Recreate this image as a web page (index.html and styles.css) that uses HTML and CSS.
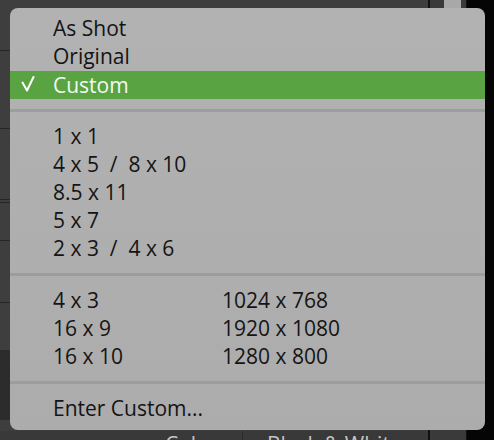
FILE: index.html
```html
<!DOCTYPE html>
<html lang="en">
<head>
  <meta charset="UTF-8" />
  <title>Crop Aspect Menu</title>
  <link rel="stylesheet" href="styles.css">
</head>
<body>

  <!-- panel behind the popup -->
  <div class="workspace">
    <div class="main-col">
      <div class="left-edge">
        <span class="rule r1"></span>
        <span class="rule r2"></span>
        <span class="rule r3"></span>
        <span class="rule r4"></span>
        <span class="rule r5"></span>
        <span class="rule r6"></span>
        <span class="dark-block"></span>
      </div>
      <div class="bottom-bar">
        <span class="tab tab-color">Color</span>
        <span class="tab tab-bw">Black &amp; White</span>
      </div>
    </div>
    <div class="side-col">
      <div class="thumb"></div>
    </div>
    <div class="black-col"></div>
  </div>

  <!-- popup menu -->
  <div class="menu">
    <div class="item">As Shot</div>
    <div class="item">Original</div>
    <div class="item selected">
      <svg class="check" width="14" height="16" viewBox="0 0 14 16">
        <path d="M1.5 6.5 L6 14.5 L12.5 1" fill="none" stroke="#fff" stroke-width="2" stroke-linecap="round" stroke-linejoin="round"/>
      </svg>
      Custom
    </div>

    <div class="sep"></div>

    <div class="item">1 x 1</div>
    <div class="item">4 x 5 &nbsp;/ &nbsp;8 x 10</div>
    <div class="item">8.5 x 11</div>
    <div class="item">5 x 7</div>
    <div class="item">2 x 3 &nbsp;/ &nbsp;4 x 6</div>

    <div class="sep"></div>

    <div class="pairs">
      <div class="item">4 x 3</div>
      <div class="item">1024 x 768</div>
      <div class="item">16 x 9</div>
      <div class="item">1920 x 1080</div>
      <div class="item">16 x 10</div>
      <div class="item">1280 x 800</div>
    </div>

    <div class="sep"></div>

    <div class="item">Enter Custom...</div>
  </div>

</body>
</html>
```

FILE: styles.css
```css
body {
  margin: 0;
  padding: 0;
  width: 494px;
  height: 440px;
  overflow: hidden;
  background-color: #3c3c3c;
  font-family: 'Open Sans', 'Liberation Sans', sans-serif;
  position: relative;
}

/* backdrop */
.workspace {
  display: flex;
  height: 440px;
}

.main-col {
  flex: 0 0 428px;
  display: flex;
  flex-direction: column;
  background-color: #3e3e3e;
  border-right: 2px solid #111;
}

.left-edge {
  flex: 1;
  position: relative;
}

.rule {
  position: absolute;
  left: 0;
  width: 12px;
  height: 1px;
  background-color: #262626;
}
.r1 { top: 50px; }
.r2 { top: 128px; }
.r3 { top: 199px; }
.r4 { top: 202px; }
.r5 { top: 240px; }
.r6 { top: 302px; }

.dark-block {
  position: absolute;
  left: 0;
  top: 350px;
  width: 12px;
  height: 70px;
  background-color: #2c2c2c;
}

.bottom-bar {
  height: 9px;
  display: flex;
  overflow: hidden;
  background-color: #393939;
  color: #c4c4c4;
  font-size: 21px;
  line-height: 28px;
}

.tab {
  display: block;
  margin-top: -1px;
}

.tab-color {
  width: 243px;
  padding-left: 165px;
  box-sizing: border-box;
  border-right: 1px solid #2a2a2a;
}

.tab-bw {
  padding-left: 24px;
}

.side-col {
  flex: 0 0 36px;
  background-color: #3a3a3a;
  border-right: 1px solid #111;
  position: relative;
}

.thumb {
  position: absolute;
  top: 0;
  left: 14px;
  width: 17px;
  height: 12px;
  background-color: #a8a8a8;
}

.black-col {
  flex: 1;
  background-color: #050505;
}

/* popup menu */
.menu {
  position: absolute;
  left: 10px;
  top: 8px;
  width: 475px;
  height: 422px;
  box-sizing: border-box;
  padding: 6px 0 8px;
  border-radius: 8px;
  background: linear-gradient(to bottom, #b2b2b2, #acacac);
  color: #141414;
  font-size: 21px;
}

.item {
  height: 28px;
  line-height: 28px;
  padding-left: 43px;
  white-space: nowrap;
  position: relative;
}

.item.selected {
  background-color: #5aa343;
  color: #f4f8f2;
  margin-top: 1px;
  margin-bottom: -1px;
}

.check {
  position: absolute;
  left: 11px;
  top: 5px;
}

.sep {
  height: 3px;
  margin: 11px 0 10px;
  background-color: #9d9d9d;
}

.pairs {
  display: grid;
  grid-template-columns: 212px 1fr;
}

.pairs .item:nth-child(even) {
  padding-left: 0;
}
```
